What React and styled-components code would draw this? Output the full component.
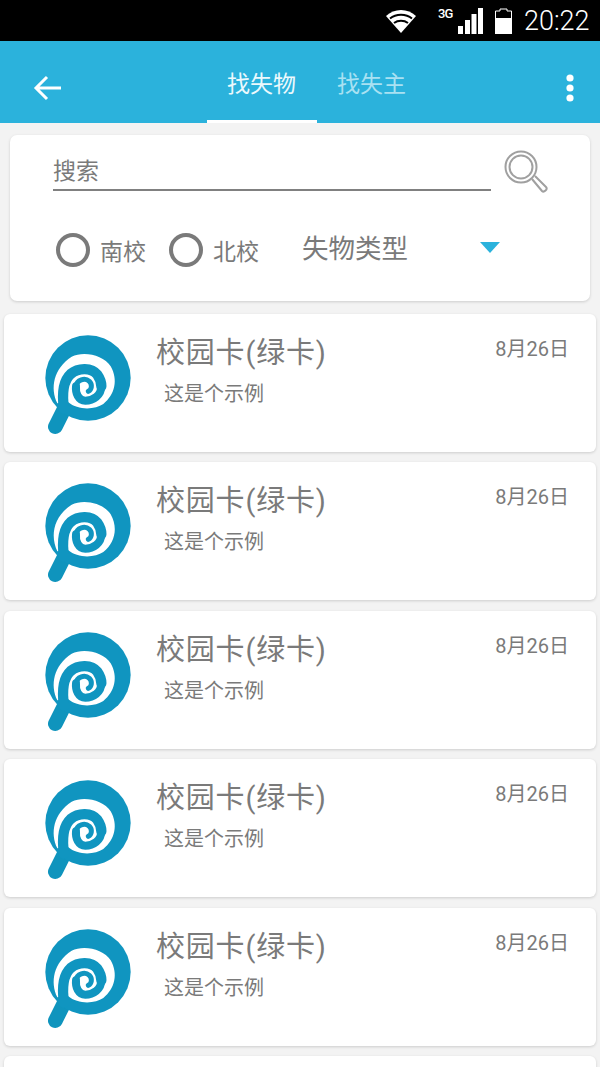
import React from 'react';
import styled, { createGlobalStyle } from 'styled-components';

const CJK = `"Roboto", "Noto Sans CJK SC", sans-serif`;

const GlobalStyle = createGlobalStyle`
  html, body {
    margin: 0;
    height: 1067px;
    overflow: hidden;
    background: #f3f3f3;
    font-family: ${CJK};
  }
`

const Page = styled.div`
  width: 600px;
  height: 1067px;
  overflow: hidden;
  background: #f3f3f3;
`
const StatusBar = styled.div`
  height: 41px;
  background: #000;
  display: flex;
  align-items: center;
  justify-content: flex-end;
  padding-right: 9px;
  color: #fff;
`
const Wifi = styled.svg`
  width: 32px;
  height: 26px;
  margin-right: 21px;
`
const NetLabel = styled.span`
  font-size: 13px;
  font-weight: 500;
  align-self: flex-start;
  margin-top: 6px;
  width: 20px;
  letter-spacing: -1px;
`
const Signal = styled.svg`
  width: 25px;
  height: 26px;
  margin-right: 12px;
`
const Battery = styled.svg`
  width: 17px;
  height: 26px;
  margin-right: 12px;
`
const Clock = styled.span`
  font-size: 27px;
  font-weight: 300;
  width: 67px;
`
const Toolbar = styled.div`
  height: 82px;
  background: #2bb2dc;
  display: flex;
  align-items: stretch;
`
const IconSlot = styled.div`
  width: ${p => p.$width}px;
  display: flex;
  align-items: center;
  justify-content: center;
  padding-top: 12px;
  box-sizing: border-box;
`
const Tabs = styled.div`
  display: flex;
  flex: 1;
  margin-left: 114px;
`
const Tab = styled.div`
  width: 110px;
  box-sizing: border-box;
  display: flex;
  justify-content: center;
  padding-top: 29px;
  padding-right: 1px;
  font-size: 23px;
  line-height: 30px;
  color: ${p => (p.$active ? '#ecf9fd' : '#a9e1f2')};
  border-bottom: 3px solid ${p => (p.$active ? '#fff' : 'transparent')};
`
const SearchCard = styled.div`
  height: 166px;
  margin: 12px 10px 13px;
  background: #fff;
  border-radius: 7px;
  box-shadow: 0 1px 3px rgba(0, 0, 0, 0.16);
  box-sizing: border-box;
  padding: 19px 43px 0 43px;
`
const SearchRow = styled.div`
  display: flex;
  align-items: flex-start;
  justify-content: space-between;
`
const SearchInput = styled.div`
  width: 438px;
  height: 37px;
  box-sizing: border-box;
  border-bottom: 2px solid #808080;
  font-size: 23px;
  line-height: 35px;
  color: #7a7a7a;
`
const SearchIcon = styled.svg`
  width: 44px;
  height: 44px;
  margin: -4px -1px 0 0;
`
const FilterRow = styled.div`
  display: flex;
  align-items: center;
  margin-top: 38px;
  height: 36px;
  padding-left: 3px;
`
const Radio = styled.span`
  width: 34px;
  height: 34px;
  box-sizing: border-box;
  border: 4px solid #7a7a7a;
  border-radius: 50%;
  margin-right: 10px;
`
const RadioLabel = styled.span`
  font-size: 23px;
  color: #7a7a7a;
  margin-right: 23px;
`
const TypeSelect = styled.div`
  display: flex;
  align-items: center;
  margin-left: 20px;
  font-size: 26.5px;
  color: #7a7a7a;
  position: relative;
  top: -4px;
`
const Caret = styled.span`
  width: 0;
  height: 0;
  margin-left: 72px;
  margin-top: 2px;
  border-left: 10px solid transparent;
  border-right: 10px solid transparent;
  border-top: 11px solid #2bb2dc;
`
const List = styled.div`
  display: flex;
  flex-direction: column;
  gap: 10.4px;
  padding: 0 4px;
`
const Row = styled.div`
  height: 138px;
  flex-shrink: 0;
  background: #fff;
  border-radius: 6px;
  box-shadow: 0 1px 3px rgba(0, 0, 0, 0.16);
  display: flex;
  align-items: flex-start;
  padding: 20px 27px 0 38px;
  box-sizing: border-box;
`
const Logo = styled.svg`
  width: 90px;
  height: 102px;
  flex-shrink: 0;
`
const RowBody = styled.div`
  flex: 1;
  margin-left: 24px;
  margin-top: 1px;
`
const Title = styled.div`
  font-size: 29px;
  letter-spacing: 0.8px;
  line-height: 36px;
  color: #7a7a7a;
`
const Desc = styled.div`
  font-size: 20px;
  line-height: 28px;
  color: #7a7a7a;
  margin: 9px 0 0 8px;
`
const DateText = styled.div`
  font-size: 20px;
  line-height: 28px;
  color: #7a7a7a;
  margin-top: 1px;
`

const LostLogo = () => (
  <Logo viewBox="6 8 270 306">
    <line x1="76" y1="226" x2="46" y2="286" stroke="#0f94bd" strokeWidth="44" strokeLinecap="round" />
    <circle cx="144" cy="140" r="128" fill="#1095c0" />
    <path d="M52 216 C30 170 40 112 95 76 C130 58 190 70 212 105 C235 145 225 190 190 218 C165 235 115 238 84 212 Z" fill="#fff" />
    <g fill="none" stroke="#1095c0" strokeLinecap="round" strokeLinejoin="round">
      <path d="M72 232 C66 190 68 150 92 128 C115 108 155 108 172 130 C180 141 184 153 184 165" strokeWidth="31" />
      <path d="M184 165 C184 192 160 208 136 208 C115 208 106 185 108 165" strokeWidth="24" />
      <path d="M108 165 C110 145 135 138 148 150 C158 160 155 175 145 180" strokeWidth="15" />
    </g>
  </Logo>
);

const items = [1, 2, 3, 4, 5];

const App = () => (
  <Page>
    <GlobalStyle />
    <StatusBar>
      <Wifi viewBox="0 0 32 26">
        <path d="M16 25 L1 8 C9 0 23 0 31 8 Z" fill="#fff" />
        <path d="M5 10.500 C11 5.500 21 5.500 27 10.500 M9 15 C13 12 19 12 23 15" fill="none" stroke="#000" strokeWidth="2" />
      </Wifi>
      <NetLabel>3G</NetLabel>
      <Signal viewBox="0 0 25 26">
        <rect x="0" y="18" width="5" height="8" fill="#fff" />
        <rect x="7" y="12" width="5" height="14" fill="#fff" />
        <rect x="13.500" y="6" width="5" height="20" fill="#fff" />
        <rect x="20" y="0" width="5" height="26" fill="#fff" />
      </Signal>
      <Battery viewBox="0 0 17 26">
        <path d="M5 3 V1 H12 V3 H16.500 V25.500 H0.500 V3 Z" fill="none" stroke="#fff" strokeWidth="1" />
        <rect x="0" y="10" width="17" height="16" fill="#fff" />
      </Battery>
      <Clock>20:22</Clock>
    </StatusBar>
    <Toolbar>
      <IconSlot $width={93}>
        <svg width="28" height="28" viewBox="0 0 28 28" fill="none" stroke="#fff" strokeWidth="3">
          <path d="M28 14 H3 M14 3 L3 14 L14 25" />
        </svg>
      </IconSlot>
      <Tabs>
        <Tab $active>找失物</Tab>
        <Tab>找失主</Tab>
      </Tabs>
      <IconSlot $width={60}>
        <svg width="8" height="28" viewBox="0 0 8 28" fill="#fff">
          <circle cx="4" cy="4" r="3.600" />
          <circle cx="4" cy="14" r="3.600" />
          <circle cx="4" cy="24" r="3.600" />
        </svg>
      </IconSlot>
    </Toolbar>
    <SearchCard>
      <SearchRow>
        <SearchInput>搜索</SearchInput>
        <SearchIcon viewBox="0 0 44 44" fill="none" stroke="#a0a0a0" strokeWidth="2">
          <circle cx="17" cy="17" r="15.500" />
          <circle cx="17" cy="17" r="11.500" />
          <path d="M28 29 L38 41 C40 43 44 39 42 37 L31 26" />
        </SearchIcon>
      </SearchRow>
      <FilterRow>
        <Radio />
        <RadioLabel>南校</RadioLabel>
        <Radio />
        <RadioLabel>北校</RadioLabel>
        <TypeSelect>
          失物类型
          <Caret />
        </TypeSelect>
      </FilterRow>
    </SearchCard>
    <List>
      {items.map(id => (
        <Row key={id}>
          <LostLogo />
          <RowBody>
            <Title>校园卡(绿卡)</Title>
            <Desc>这是个示例</Desc>
          </RowBody>
          <DateText>8月26日</DateText>
        </Row>
      ))}
      <Row />
    </List>
  </Page>
);

export default App;
